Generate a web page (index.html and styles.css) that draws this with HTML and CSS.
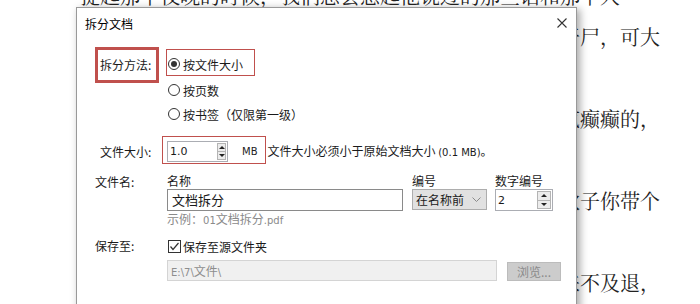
FILE: index.html
```html
<!DOCTYPE html>
<html lang="zh-CN">
<head>
    <meta charset="UTF-8">
    <title>拆分文档</title>
    <link rel="stylesheet" href="styles.css">
</head>
<body>

    <!-- Document text behind the dialog -->
    <div class="page">
        <div class="line short"><span>提起那个夜晚的时候，我们总会想起他说过的那些话和那个人</span></div>
        <div class="line"><span>那天晚上他们在村子后山的山脚下发现了一具早已冰冷的干尸，可大</span></div>
        <div class="line short"><span>家都不敢说话。</span></div>
        <div class="line"><span>老人站在门口一动不动，眼睛直勾勾地盯着远处，整个人都变得疯癫癫的，</span></div>
        <div class="line short"><span>谁也叫不醒他。</span></div>
        <div class="line"><span>第二天一早，村长把大家叫到祠堂里说：这件事情总得有人去办，小伙子你带个</span></div>
        <div class="line short"><span>人去看看。</span></div>
        <div class="line"><span>他们刚走到半山腰，就听见林子里传来一阵奇怪的响声，想跑都来不及退，</span></div>
    </div>

    <div class="dialog">
        <div class="titlebar">
            <span>拆分文档</span>
            <svg class="close" width="10" height="10" viewBox="0 0 10 10">
                <path d="M0.5 0.5 L9.5 9.5 M9.5 0.5 L0.5 9.5" stroke="#333" stroke-width="1.1" fill="none"/>
            </svg>
        </div>

        <div class="dialog-body">
            <!-- Split method -->
            <div class="row row-method">
                <div class="label label-boxed">拆分方法:</div>
                <div class="radios">
                    <div class="radio radio-boxed"><span class="dot checked"></span>按文件大小</div>
                    <div class="radio"><span class="dot"></span>按页数</div>
                    <div class="radio"><span class="dot"></span>按书签（仅限第一级）</div>
                </div>
            </div>

            <!-- File size -->
            <div class="row row-size">
                <div class="label label-size">文件大小:</div>
                <div class="size-box">
                    <div class="spin spin-size">
                        <span class="spin-value">1.0</span>
                        <span class="spin-btns"><i class="up"></i><i class="down"></i></span>
                    </div>
                    <span class="unit">MB</span>
                </div>
                <span class="hint">文件大小必须小于原始文档大小 <span class="latin">(0.1 MB)</span>。</span>
            </div>

            <!-- File name -->
            <div class="row row-name">
                <div class="label label-wide">文件名:</div>
                <div class="field field-name">
                    <div class="field-title">名称</div>
                    <div class="textbox">文档拆分</div>
                    <div class="example">示例：<span class="latin">01</span>文档拆分<span class="latin">.pdf</span></div>
                </div>
                <div class="field field-order">
                    <div class="field-title">编号</div>
                    <div class="select">
                        <span>在名称前</span>
                        <svg width="9" height="6" viewBox="0 0 9 6"><polyline points="0.5,0.5 4.5,4.5 8.5,0.5" stroke="#8a8a8a" fill="none"/></svg>
                    </div>
                </div>
                <div class="field field-digits">
                    <div class="field-title">数字编号</div>
                    <div class="spin spin-digits">
                        <span class="spin-value">2</span>
                        <span class="spin-btns"><i class="up"></i><i class="down"></i></span>
                    </div>
                </div>
            </div>

            <!-- Save location -->
            <div class="row row-save">
                <div class="label label-wide">保存至:</div>
                <div class="save-col">
                    <div class="check-line">
                        <svg class="checkbox" width="13" height="13" viewBox="0 0 13 13">
                            <rect x="0.5" y="0.5" width="12" height="12" fill="#fff" stroke="#333"/>
                            <polyline points="2.5,6.5 5,9.5 10.5,3" stroke="#333" stroke-width="1.2" fill="none"/>
                        </svg>
                        保存至源文件夹
                    </div>
                    <div class="path-line">
                        <div class="path"><span class="latin">E:\7\</span>文件<span class="latin">\</span></div>
                        <div class="browse">浏览...</div>
                    </div>
                </div>
            </div>
        </div>
    </div>

</body>
</html>
```

FILE: styles.css
```css
/* General styling */
body {
    margin: 0;
    background-color: #fff;
    overflow: hidden;
    font-family: "Noto Sans CJK SC", sans-serif;
    color: #1a1a1a;
}

/* Page text behind the dialog */
.page {
    margin-top: -25px;
    margin-left: 80px;
    width: 580px;
    font-family: "Noto Serif CJK SC", "Noto Sans CJK SC", serif;
    font-size: 20px;
    color: #222;
}
.line {
    height: 41px;
    line-height: 41px;
    display: flex;
    justify-content: flex-end;
    white-space: nowrap;
    overflow: hidden;
}
.line.short {
    justify-content: flex-start;
}

/* Dialog window */
.dialog {
    position: absolute;
    left: 76px;
    top: 7px;
    width: 501px;
    height: 320px;
    box-sizing: border-box;
    background-color: #fff;
    border: 1px solid #999;
    box-shadow: 3px 2px 8px rgba(0, 0, 0, 0.35);
    font-size: 12px;
}
.titlebar {
    height: 30px;
    display: flex;
    align-items: center;
    justify-content: space-between;
    padding: 0 9px 0 8px;
    color: #000;
}
.close {
    margin-top: -1px;
}
.dialog-body {
    padding: 9px 0 0 18px;
}
.row {
    display: flex;
    align-items: flex-start;
}
.latin {
    font-family: "DejaVu Sans", sans-serif;
    font-size: 10px;
}

/* Split method */
.label-boxed {
    width: 64px;
    height: 36px;
    box-sizing: border-box;
    border: 3px solid #c0504d;
    padding-left: 2px;
    line-height: 30px;
}
.radios {
    margin: 2px 0 0 7px;
}
.radio {
    display: flex;
    align-items: center;
    height: 24px;
    padding-left: 1px;
    border: 1px solid transparent;
}
.radio + .radio {
    height: 24px;
    border-width: 0 1px;
}
.radio-boxed {
    width: 89px;
    height: 27px;
    box-sizing: border-box;
    border-color: #c0504d;
    padding-top: 3px;
    margin-bottom: 2px;
}
.dot {
    width: 12px;
    height: 12px;
    box-sizing: border-box;
    border: 1px solid #333;
    border-radius: 50%;
    margin-right: 3px;
    display: flex;
    align-items: center;
    justify-content: center;
}
.dot.checked::after {
    content: "";
    width: 6px;
    height: 6px;
    border-radius: 50%;
    background-color: #333;
}

/* File size */
.row-size {
    margin-top: 10px;
}
.label-size {
    width: 67px;
    box-sizing: border-box;
    padding: 2px 0 0 5px;
    line-height: 28px;
}
.size-box {
    height: 28px;
    box-sizing: border-box;
    border: 1px solid #c0504d;
    display: flex;
    align-items: center;
    padding: 2px 7px 0 4px;
}
.unit {
    font-family: "DejaVu Sans", sans-serif;
    font-size: 10px;
    margin-left: 14px;
    color: #222;
}
.hint {
    margin-left: 2px;
    line-height: 30px;
}

/* Spin boxes */
.spin {
    height: 21px;
    box-sizing: border-box;
    border: 1px solid #abadb3;
    display: flex;
    align-items: center;
    justify-content: space-between;
    background-color: #fff;
}
.spin-size {
    width: 61px;
}
.spin-digits {
    width: 58px;
    height: 22px;
}
.spin-value {
    font-family: "DejaVu Sans", sans-serif;
    font-size: 11px;
    padding-left: 2px;
}
.spin-btns {
    display: flex;
    flex-direction: column;
    height: 100%;
    padding: 1px;
    box-sizing: border-box;
}
.spin-size .spin-btns {
    width: 11px;
}
.spin-digits .spin-btns {
    width: 16px;
}
.spin-btns i {
    flex: 1;
    border: 1px solid #b4b4b4;
    background-color: #ececec;
    display: flex;
    align-items: center;
    justify-content: center;
}
.spin-btns i + i {
    border-top: none;
}
.spin-btns i::after {
    content: "";
    border-left: 3px solid transparent;
    border-right: 3px solid transparent;
}
.spin-btns .up::after {
    border-bottom: 3px solid #222;
}
.spin-btns .down::after {
    border-top: 3px solid #222;
}

/* File name */
.row-name {
    margin-top: 6px;
}
.label-wide {
    width: 72px;
    line-height: 16px;
}
.field-title {
    line-height: 14px;
    margin-bottom: 1px;
}
.textbox {
    width: 236px;
    height: 22px;
    box-sizing: border-box;
    border: 1px solid #8a8a8a;
    padding-left: 4px;
    font-size: 13px;
    line-height: 20px;
}
.example {
    color: #8a8a8a;
    line-height: 16px;
}
.field-order {
    margin-left: 9px;
}
.select {
    width: 75px;
    height: 21px;
    box-sizing: border-box;
    border: 1px solid #adadad;
    background-color: #e1e1e1;
    display: flex;
    align-items: center;
    justify-content: space-between;
    padding: 0 5px 0 3px;
}
.field-digits {
    margin-left: 8px;
}

/* Save location */
.row-save {
    margin-top: 9px;
}
.check-line {
    display: flex;
    align-items: center;
    height: 16px;
}
.checkbox {
    margin: 0 2px 0 1px;
}
.path-line {
    display: flex;
    align-items: flex-end;
    margin-top: 6px;
}
.path {
    width: 330px;
    height: 21px;
    box-sizing: border-box;
    border: 1px solid #d4d4d4;
    background-color: #f0f0f0;
    color: #8d8d8d;
    padding-left: 3px;
    line-height: 19px;
}
.browse {
    width: 54px;
    height: 19px;
    box-sizing: border-box;
    margin-left: 10px;
    border: 1px solid #bcbcbc;
    background-color: #cccccc;
    color: #8a8a8a;
    text-align: center;
    line-height: 17px;
}
```
